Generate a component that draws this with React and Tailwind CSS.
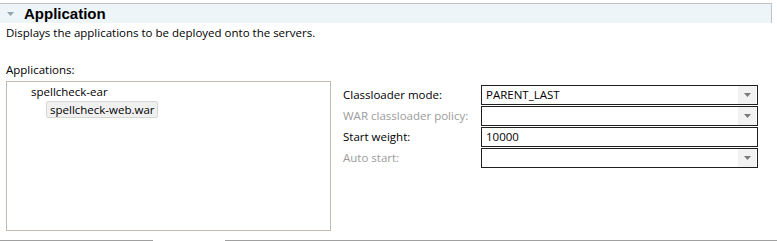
import React from "react";

const font = { fontFamily: "'Open Sans', 'Noto Sans', sans-serif" };

function Arrow() {
  return (
    <div className="flex h-full w-[18px] items-center justify-center bg-[#f2f2f2]">
      <svg width="7" height="4" viewBox="0 0 7 4">
        <path d="M0 0H7L3.5 4Z" fill="#7a7a7a" />
      </svg>
    </div>
  );
}

function Field({ label, disabled, value, combo }) {
  return (
    <div className="flex h-[20px] items-center">
      <div className={`w-[138px] whitespace-nowrap text-[11.5px] ${disabled ? "text-[#9b9b9b]" : "text-black"}`}>{label}</div>
      <div className="flex h-[20px] w-[277px] items-center justify-between border border-[#1f1f1f] bg-white pl-[4px] pr-[1px] text-[11.5px] text-black">
        <span>{value}</span>
        {combo && <Arrow />}
      </div>
    </div>
  );
}

export default function App() {
  return (
    <div className="relative h-[241px] w-[777px] overflow-hidden bg-white text-black" style={font}>
      <div className="mt-[3px] mr-[5px] flex h-[20px] items-center border-t border-r border-[#c3c3c3] bg-[#eef5f8]">
        <svg className="ml-[7px]" width="7" height="4" viewBox="0 0 7 4">
          <path d="M0 0H7L3.5 4Z" fill="#8fa3b1" />
        </svg>
        <span className="ml-[10px] text-[15px] font-bold leading-none" style={{ fontFamily: "'Liberation Sans', Arial, sans-serif" }}>
          Application
        </span>
      </div>
      <div className="mt-[3px] pl-[6px] text-[11.5px] leading-[14px]">Displays the applications to be deployed onto the servers.</div>
      <div className="mt-[23px] pl-[6px] text-[11.5px] leading-[14px]">Applications:</div>
      <div className="mt-[4px] flex">
        <div className="ml-[6px] h-[150px] w-[325px] border border-[#c0bcae] text-[11.5px]">
          <div className="ml-[24px] mt-[2px] leading-[16px]">spellcheck-ear</div>
          <div className="ml-[39px] mt-[1px] inline-block rounded-[2px] border border-[#d6d6d6] bg-[#f0f0f0] px-[3px] leading-[15px]">
            spellcheck-web.war
          </div>
        </div>
        <div className="ml-[12px] mt-[4px] flex flex-col gap-[1px]">
          <Field label="Classloader mode:" value="PARENT_LAST" combo />
          <Field label="WAR classloader policy:" disabled combo />
          <Field label="Start weight:" value="10000" />
          <Field label="Auto start:" disabled combo />
        </div>
      </div>
      <div className="absolute left-0 top-[240px] flex h-[3px] w-full">
        <div className="h-full w-[54px] border-t border-r border-[#a0a0a0]" />
        <div className="h-full w-[49px] border-t border-r border-[#a0a0a0]" />
        <div className="h-full w-[50px] border-t border-r border-[#a0a0a0]" />
        <div className="h-full w-[72px]" />
        <div className="h-full w-[101px] border-t border-l border-r border-[#a0a0a0]" />
        <div className="h-full w-[44px] border-t border-r border-[#a0a0a0]" />
        <div className="h-full flex-1 border-t border-[#a0a0a0]" />
      </div>
    </div>
  );
}
